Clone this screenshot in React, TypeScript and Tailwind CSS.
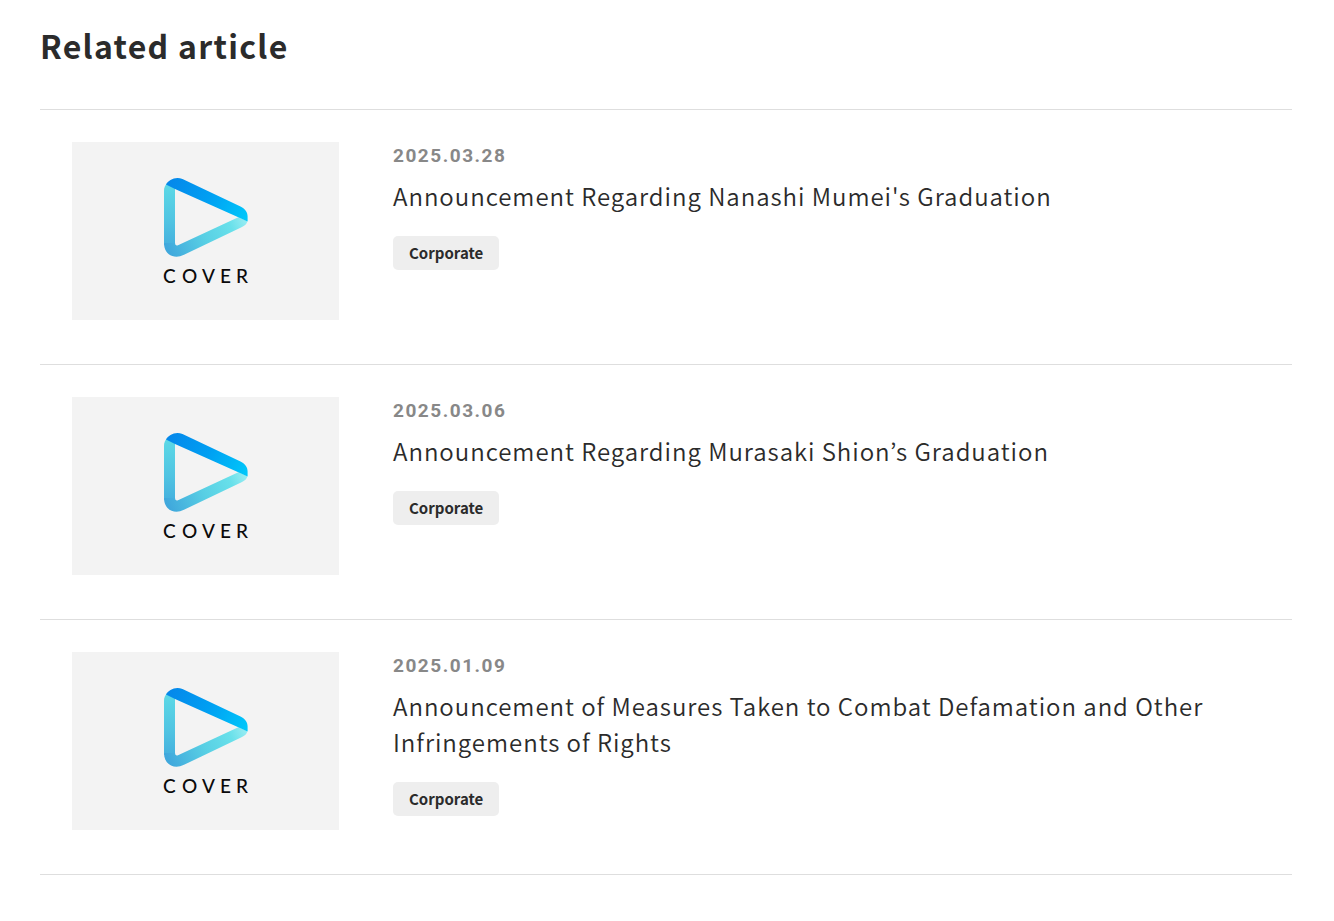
import { JSX } from 'react'

type Article = {
  date: string
  title: string
  category: string
}

const articles: Article[] = [
  {
    date: '2025.03.28',
    title: "Announcement Regarding Nanashi Mumei's Graduation",
    category: 'Corporate'
  },
  {
    date: '2025.03.06',
    title: 'Announcement Regarding Murasaki Shion’s Graduation',
    category: 'Corporate'
  },
  {
    date: '2025.01.09',
    title: 'Announcement of Measures Taken to Combat Defamation and Other Infringements of Rights',
    category: 'Corporate'
  }
]

function CoverLogo({ id }: { id: string }): JSX.Element {
  return (
    <svg viewBox="0 0 267 178" className="block w-full" role="img" aria-label="COVER">
      <defs>
        <linearGradient id={`${id}-top`} gradientUnits="userSpaceOnUse" x1="96" y1="38" x2="176" y2="76">
          <stop offset="0" stopColor="#0587ea" />
          <stop offset="0.5" stopColor="#009ff2" />
          <stop offset="1" stopColor="#00c8fa" />
        </linearGradient>
        <linearGradient id={`${id}-left`} gradientUnits="userSpaceOnUse" x1="0" y1="42" x2="0" y2="115">
          <stop offset="0" stopColor="#5cd9e6" />
          <stop offset="0.5" stopColor="#50c4e2" />
          <stop offset="1" stopColor="#40a8dc" />
        </linearGradient>
        <linearGradient id={`${id}-bottom`} gradientUnits="userSpaceOnUse" x1="98" y1="112" x2="174" y2="78">
          <stop offset="0" stopColor="#40a8dc" />
          <stop offset="0.45" stopColor="#58cfe4" />
          <stop offset="0.8" stopColor="#68e0ea" />
          <stop offset="1" stopColor="#98ecf2" />
        </linearGradient>
      </defs>
      <path d="M95.3 41Q92 44 92 49V103L103 103V46Z" fill={`url(#${id}-left)`} />
      <path
        d="M92 101C92 110 98 114.8 104.5 114.8Q108 114.8 112 112.8L169 85.6Q175.3 82.5 175.3 79L166.3 75.3L106 103.2Q103 104.3 103 101Z"
        fill={`url(#${id}-bottom)`}
      />
      <path
        d="M94 42.5C96.5 38 103.5 34 110.5 37L168.5 64.5C173.5 67 175.6 70.5 175.6 74.5V79.5L166.3 75.3L103 47Z"
        fill={`url(#${id}-top)`}
      />
      <text x="91 110 130 148 164" y="141" fontSize="19" fontWeight="500" fill="#0a0a0a" className="font-['Lato',sans-serif]">
        COVER
      </text>
    </svg>
  )
}

export default function App(): JSX.Element {
  return (
    <section className="bg-white pt-5 pb-11 pl-10 pr-[42px] font-['Noto_Sans_CJK_JP',sans-serif] text-[#2b2b2b]">
      <h2 className="text-[32px] leading-[50px] font-bold tracking-[0.04em]">Related article</h2>
      <ul className="mt-[39px] border-t border-[#dedede]">
        {articles.map((article, i) => (
          <li key={article.date} className="border-b border-[#dedede]">
            <a href="#" className="flex items-start gap-[54px] px-8 pt-8 pb-11">
              <div className="w-[267px] shrink-0 bg-[#f3f3f3]">
                <CoverLogo id={`cover-${i}`} />
              </div>
              <div className="min-w-0 flex-1">
                <time className="block font-['Roboto',sans-serif] text-[19px] leading-7 font-bold tracking-[0.08em] text-[#888888]">
                  {article.date}
                </time>
                <p className="mt-2 text-[24px] leading-9 font-[350] tracking-[0.04em]">{article.title}</p>
                <span className="mt-[22px] inline-block rounded-[5px] bg-[#eeeeee] px-4 text-[15px] leading-[34px] font-bold">
                  {article.category}
                </span>
              </div>
            </a>
          </li>
        ))}
      </ul>
    </section>
  )
}
